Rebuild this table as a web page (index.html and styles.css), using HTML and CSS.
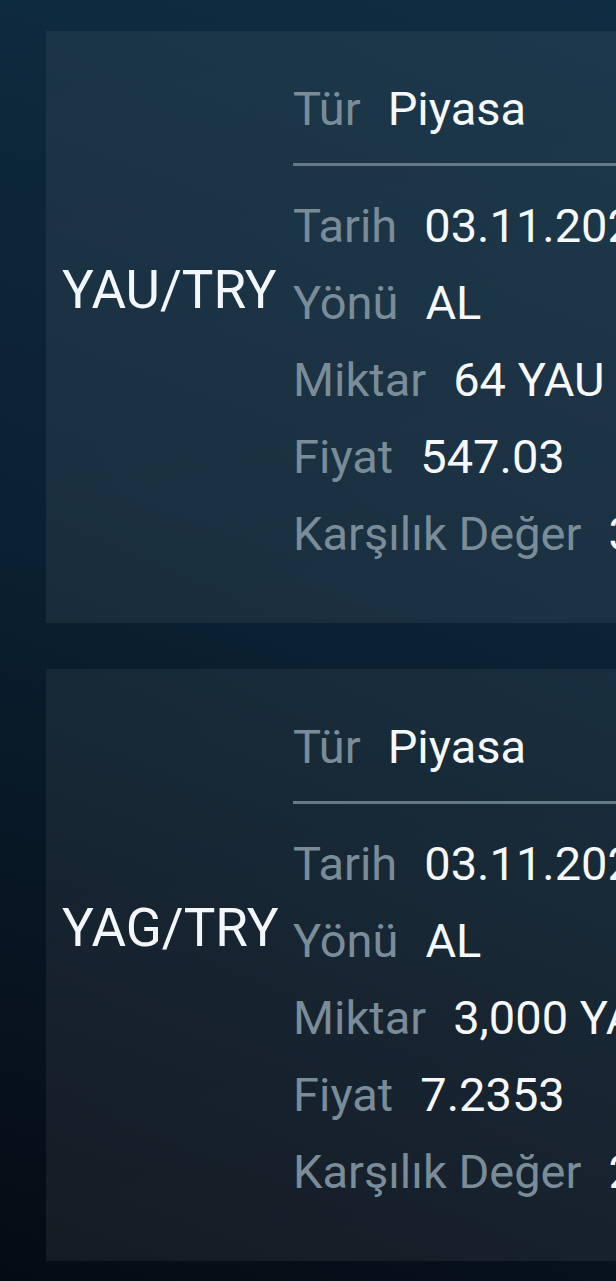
FILE: index.html
```html
<!DOCTYPE html>
<html lang="tr">
<head>
<meta charset="utf-8">
<link rel="stylesheet" href="styles.css">
</head>
<body>
<main class="list">
  <section class="card">
    <div class="pair">YAU/TRY</div>
    <div class="details">
      <div class="row"><span class="label">Tür</span><span class="value">Piyasa</span></div>
      <div class="divider"></div>
      <div class="row"><span class="label">Tarih</span><span class="value">03.11.2023 10:42</span></div>
      <div class="row"><span class="label">Yönü</span><span class="value">AL</span></div>
      <div class="row"><span class="label">Miktar</span><span class="value">64 YAU</span></div>
      <div class="row"><span class="label">Fiyat</span><span class="value">547.03</span></div>
      <div class="row"><span class="label">Karşılık Değer</span><span class="value">35,009.92 TRY</span></div>
    </div>
  </section>
  <section class="card">
    <div class="pair">YAG/TRY</div>
    <div class="details">
      <div class="row"><span class="label">Tür</span><span class="value">Piyasa</span></div>
      <div class="divider"></div>
      <div class="row"><span class="label">Tarih</span><span class="value">03.11.2023 10:40</span></div>
      <div class="row"><span class="label">Yönü</span><span class="value">AL</span></div>
      <div class="row"><span class="label">Miktar</span><span class="value">3,000 YAG</span></div>
      <div class="row"><span class="label">Fiyat</span><span class="value">7.2353</span></div>
      <div class="row"><span class="label">Karşılık Değer</span><span class="value">21,705.90 TRY</span></div>
    </div>
  </section>
</main>
</body>
</html>
```
FILE: styles.css
```css
html, body {
  margin: 0;
  padding: 0;
  height: 100%;
}
body {
  overflow: hidden;
  font-family: Roboto, "Noto Sans", sans-serif;
  background: linear-gradient(200deg, #0f2d42 0%, #0b2233 45%, #050b14 100%);
}
.list {
  display: flex;
  flex-direction: column;
  gap: 46px;
  padding: 31px 0 0 46px;
}
.card {
  width: 760px;
  height: 592px;
  box-sizing: border-box;
  display: flex;
  align-items: center;
  gap: 16px;
  padding: 0 0 0 16px;
  background: linear-gradient(160deg, rgba(255,255,255,0.055), rgba(255,255,255,0.065));
}
.pair {
  flex: none;
  width: 215px;
  color: #f4f7f9;
  font-size: 53px;
  line-height: 60px;
  white-space: nowrap;
  margin-bottom: 74px;
}
.details {
  flex: 1;
  display: flex;
  flex-direction: column;
  padding-bottom: 13px;
}
.row {
  display: flex;
  gap: 27px;
  font-size: 47px;
  line-height: 77px;
  white-space: nowrap;
}
.label {
  color: #7a8c98;
}
.value {
  color: #f6f8fa;
}
.divider {
  height: 3px;
  background: #667987;
  margin: 16px 0 21px;
}
```
